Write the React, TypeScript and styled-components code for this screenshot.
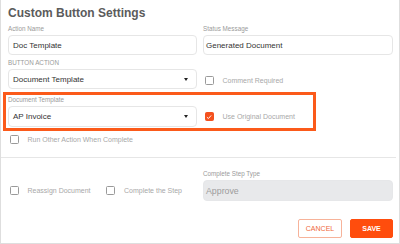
import styled, { createGlobalStyle } from 'styled-components';

const GlobalStyle = createGlobalStyle`
    html, body {
        margin: 0;
        padding: 0;
        background: #fff;
    }
    body {
        font-family: "Liberation Sans", Arial, sans-serif;
    }
`;

const Card = styled.div`
    box-sizing: border-box;
    width: 400px;
    height: 244px;
    padding: 0 6px 0 7px;
    border: 1px solid #dedede;
    border-top: none;
    background: #fff;
    overflow: hidden;
`;

const Title = styled.h1`
    margin: 0;
    height: 24px;
    line-height: 26px;
    font-size: 12px;
    font-weight: 700;
    color: #5b5b5b;
`;

const Grid = styled.div<{ $mt?: number }>`
    position: relative;
    display: grid;
    grid-template-columns: 189px 1fr;
    column-gap: 6px;
    margin-top: ${(p) => p.$mt ?? 0}px;
`;

const Highlight = styled.div`
    position: absolute;
    left: -5px;
    top: -3px;
    width: 307px;
    height: 33px;
    border: 3px solid #fb5a1a;
    pointer-events: none;
`;

const Field = styled.div`
    display: flex;
    flex-direction: column;
`;

const Label = styled.label`
    font-size: 6.3px;
    line-height: 10px;
    height: 10px;
    margin-bottom: 1px;
    color: #9a9a9a;
`;

const Input = styled.div<{ $disabled?: boolean; $h?: number; $pl?: number }>`
    box-sizing: border-box;
    height: ${(p) => p.$h ?? 20}px;
    display: flex;
    align-items: center;
    justify-content: space-between;
    padding: 0 8px 0 ${(p) => p.$pl ?? 4}px;
    border: 1px solid ${(p) => (p.$disabled ? '#e6e7e9' : '#e6e6e6')};
    border-radius: 4px;
    background: ${(p) => (p.$disabled ? '#e8e9eb' : '#fff')};
    color: ${(p) => (p.$disabled ? '#9c9c9c' : '#333')};
    font-size: ${(p) => (p.$disabled ? 8.8 : 8)}px;
`;

const Caret = styled.span`
    width: 0;
    height: 0;
    border-left: 2.5px solid transparent;
    border-right: 2.5px solid transparent;
    border-top: 3.5px solid #222;
`;

const CheckCell = styled.div<{ $pb?: number }>`
    align-self: end;
    display: flex;
    align-items: center;
    gap: 14px;
    padding-bottom: ${(p) => p.$pb ?? 0}px;
`;

const CheckItem = styled.div`
    display: flex;
    align-items: center;
    gap: 9px;
    padding-left: 1.5px;
    font-size: 7px;
    white-space: nowrap;
    color: #a8a8a8;
`;

const Box = styled.span<{ $checked?: boolean }>`
    box-sizing: border-box;
    flex: none;
    width: 9px;
    height: 9px;
    border-radius: 1.5px;
    border: 1.2px solid ${(p) => (p.$checked ? '#f4511e' : '#9a9a9a')};
    background: ${(p) => (p.$checked ? '#f4511e' : '#fff')};
    display: flex;
    align-items: center;
    justify-content: center;
`;

const CheckRow = styled.div`
    margin-top: 7px;
    height: 10px;
    display: flex;
`;

const Divider = styled.hr`
    margin: 13px -3px 0 -7px;
    border: none;
    border-top: 1px solid #e6e6e6;
`;

const Actions = styled.div`
    display: flex;
    justify-content: flex-end;
    gap: 8px;
    margin-top: 18px;
`;

const Button = styled.button<{ $primary?: boolean }>`
    box-sizing: border-box;
    height: 19px;
    padding: 0;
    width: ${(p) => (p.$primary ? 43 : 44)}px;
    border-radius: 2px;
    border: 1px solid ${(p) => (p.$primary ? '#ff4d0d' : '#f7b39a')};
    background: ${(p) => (p.$primary ? '#ff4d0d' : '#fff')};
    color: ${(p) => (p.$primary ? '#fff' : '#f0693a')};
    font-family: "Liberation Sans", Arial, sans-serif;
    font-size: 7px;
    font-weight: ${(p) => (p.$primary ? 700 : 400)};
`;

function Check({ checked }: { checked?: boolean }) {
    return (
        <Box $checked={checked}>
            {checked && (
                <svg width="6" height="6" viewBox="0 0 10 10">
                    <path d="M1.5 5.2 L4 7.6 L8.6 2.4" fill="none" stroke="#fff" strokeWidth="1.6" />
                </svg>
            )}
        </Box>
    );
}

export default function App() {
    return (
        <>
            <GlobalStyle />
            <Card>
                <Title>Custom Button Settings</Title>
                <Grid>
                    <Field>
                        <Label>Action Name</Label>
                        <Input>Doc Template</Input>
                    </Field>
                    <Field>
                        <Label>Status Message</Label>
                        <Input $pl={2}>Generated Document</Input>
                    </Field>
                </Grid>
                <Grid $mt={3}>
                    <Field>
                        <Label>BUTTON ACTION</Label>
                        <Input>
                            Document Template
                            <Caret />
                        </Input>
                    </Field>
                    <CheckCell $pb={4}>
                        <CheckItem>
                            <Check />
                            Comment Required
                        </CheckItem>
                    </CheckCell>
                </Grid>
                <Grid $mt={6}>
                    <Highlight />
                    <Field>
                        <Label>Document Template</Label>
                        <Input $h={21}>
                            AP Invoice
                            <Caret />
                        </Input>
                    </Field>
                    <CheckCell $pb={6}>
                        <CheckItem>
                            <Check checked />
                            Use Original Document
                        </CheckItem>
                    </CheckCell>
                </Grid>
                <CheckRow>
                    <CheckItem>
                        <Check />
                        Run Other Action When Complete
                    </CheckItem>
                </CheckRow>
                <Divider />
                <Grid $mt={11}>
                    <CheckCell $pb={6}>
                        <CheckItem>
                            <Check />
                            Reassign Document
                        </CheckItem>
                        <CheckItem>
                            <Check />
                            Complete the Step
                        </CheckItem>
                    </CheckCell>
                    <Field>
                        <Label>Complete Step Type</Label>
                        <Input $disabled $h={21} $pl={2}>
                            Approve
                        </Input>
                    </Field>
                </Grid>
                <Actions>
                    <Button>CANCEL</Button>
                    <Button $primary>SAVE</Button>
                </Actions>
            </Card>
        </>
    );
}
